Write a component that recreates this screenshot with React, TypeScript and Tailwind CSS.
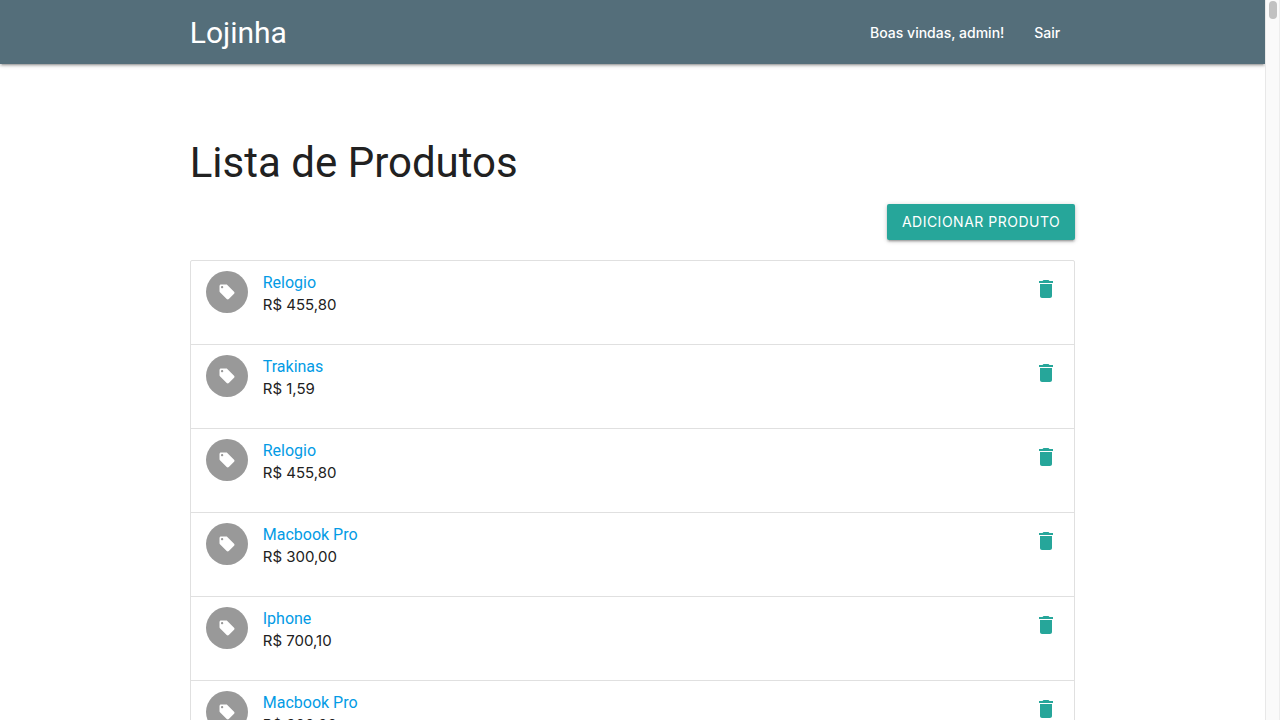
import React from "react";
import { MdDelete, MdLocalOffer } from "react-icons/md";

type Product = { id: number; name: string; price: string };

const products: Product[] = [
  { id: 1, name: "Relogio", price: "R$ 455,80" },
  { id: 2, name: "Trakinas", price: "R$ 1,59" },
  { id: 3, name: "Relogio", price: "R$ 455,80" },
  { id: 4, name: "Macbook Pro", price: "R$ 300,00" },
  { id: 5, name: "Iphone", price: "R$ 700,10" },
  { id: 6, name: "Macbook Pro", price: "R$ 300,00" },
];

const shadow =
  "shadow-[0_2px_2px_0_rgba(0,0,0,0.14),0_3px_1px_-2px_rgba(0,0,0,0.12),0_1px_5px_0_rgba(0,0,0,0.2)]";

function Header() {
  return (
    <header className={`relative h-16 shrink-0 bg-[#546e7a] text-white ${shadow}`}>
      <nav className="mx-auto flex h-full w-[70%] items-center justify-between">
        <a href="#inicio" className="font-['Roboto',sans-serif] text-[30px]">
          Lojinha
        </a>
        <ul className="flex text-[14px] font-medium">
          <li className="px-[15px]">Boas vindas, admin!</li>
          <li>
            <a href="#sair" className="px-[15px]">
              Sair
            </a>
          </li>
        </ul>
      </nav>
    </header>
  );
}

function ProductRow({ product }: { product: Product }) {
  return (
    <li className="flex h-[84px] items-start border-b border-[#e0e0e0] pr-4 pl-[15px] pt-[10px] last:border-b-0">
      <span className="flex size-[42px] items-center justify-center rounded-full bg-[#999999] text-white">
        <MdLocalOffer className="size-[18px]" aria-hidden="true" />
      </span>
      <div className="ml-[15px] flex-1">
        <a
          href={`#produto-${product.id}`}
          className="block font-['Roboto',sans-serif] text-[16px] leading-[23px] text-[#039be5]"
        >
          {product.name}
        </a>
        <p className="text-[15px] leading-[22px]">{product.price}</p>
      </div>
      <button
        type="button"
        aria-label={`Excluir ${product.name}`}
        className="mt-[6px] cursor-pointer text-[#26a69a]"
      >
        <MdDelete className="size-6" />
      </button>
    </li>
  );
}

export default function App() {
  return (
    <div className="flex h-screen overflow-hidden bg-white font-['Inter',sans-serif] text-[#212121]">
      <div className="min-w-0 flex-1 overflow-x-hidden overflow-y-auto [scrollbar-width:none]">
        <Header />
        <main className="mx-auto w-[70%] pt-[74px]">
          <h1 className="font-['Roboto',sans-serif] text-[42px] leading-[50px]">
            Lista de Produtos
          </h1>
          <div className="mt-4 flex justify-end">
            <button
              type="button"
              className={`h-9 cursor-pointer rounded-[2px] bg-[#26a69a] px-[15px] pb-px text-[14px] tracking-[0.5px] text-white uppercase ${shadow}`}
            >
              Adicionar produto
            </button>
          </div>
          <ul className="mt-5 rounded-[2px] border border-[#e0e0e0]">
            {products.map((product) => (
              <ProductRow key={product.id} product={product} />
            ))}
          </ul>
        </main>
      </div>
      <div
        aria-hidden="true"
        className="flex w-[15px] shrink-0 justify-center border-x border-l-[#e8e8e8] border-r-[#ededed] bg-[#fafafa] pt-px"
      >
        <div className="h-[18px] w-2 rounded-full bg-[#c1c1c1]" />
      </div>
    </div>
  );
}
